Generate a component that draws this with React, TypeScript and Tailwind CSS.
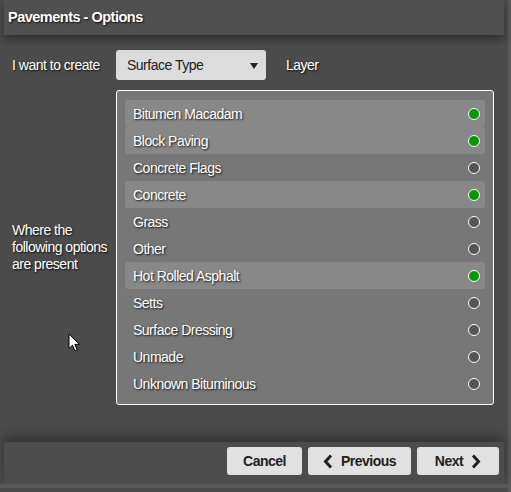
import React from "react";

const items: { name: string; on: boolean }[] = [
  { name: "Bitumen Macadam", on: true },
  { name: "Block Paving", on: true },
  { name: "Concrete Flags", on: false },
  { name: "Concrete", on: true },
  { name: "Grass", on: false },
  { name: "Other", on: false },
  { name: "Hot Rolled Asphalt", on: true },
  { name: "Setts", on: false },
  { name: "Surface Dressing", on: false },
  { name: "Unmade", on: false },
  { name: "Unknown Bituminous", on: false },
];

const shadowText = "[text-shadow:1px_1px_2px_rgba(0,0,0,0.85)]";

function Chevron({ dir }: { dir: "left" | "right" }) {
  return (
    <svg width="10" height="15" viewBox="0 0 10 15" className="shrink-0">
      <path
        d={dir === "left" ? "M8 1.5 L2.5 7.5 L8 13.5" : "M2 1.5 L7.5 7.5 L2 13.5"}
        fill="none"
        stroke="#222"
        strokeWidth="3"
        strokeLinecap="butt"
        strokeLinejoin="miter"
      />
    </svg>
  );
}

export default function App() {
  return (
    <div
      className="relative flex w-[511px] h-[492px] overflow-hidden bg-[#4b4b4b] text-[14px] tracking-[-0.5px]"
      style={{ fontFamily: '"Liberation Sans", Arial, sans-serif' }}
    >
      <div className="flex flex-col w-[508px] h-[488px]">
        {/* header */}
        <div className="relative z-10 ml-[4px] w-[500px] h-[35px] shrink-0 bg-[#505050] shadow-[0_5px_8px_rgba(0,0,0,0.35)] flex items-center pl-[4px] pt-[1px]">
          <span className={`font-bold text-white text-[14.5px] ${shadowText}`}>Pavements - Options</span>
        </div>

        {/* body */}
        <div className="flex-1 flex flex-col pt-[15px] pl-[12px]">
          <div className="flex items-center h-[30px]">
            <div className={`w-[104px] text-white pt-[1px] ${shadowText}`}>I want to create</div>
            <div className="w-[150px] h-[30px] rounded-[3px] bg-[#dcdcdc] flex items-center justify-between pl-[11px] pr-[8px] pt-[1px] text-[#222]">
              <span>Surface Type</span>
              <svg width="8" height="6" viewBox="0 0 8 6">
                <path d="M0 0 H8 L4 6 Z" fill="#222" />
              </svg>
            </div>
            <div className={`ml-[20px] pt-[1px] text-white ${shadowText}`}>Layer</div>
          </div>

          <div className="flex items-center mt-[10px]">
            <div className={`w-[104px] pr-[4px] text-white leading-[17px] ${shadowText}`}>
              Where the following options are present
            </div>
            <div className="w-[378px] h-[315px] border border-white rounded-[3px] bg-[#777777] pt-[9px] pb-[7px] px-[8px] flex flex-col">
              {items.map((it) => (
                <div
                  key={it.name}
                  className={`h-[27px] shrink-0 flex items-center justify-between pl-[8px] pr-[5px] rounded-[3px] ${
                    it.on ? "bg-[#888888]" : ""
                  }`}
                >
                  <span className={`text-white pt-[1px] ${shadowText}`}>{it.name}</span>
                  <span
                    className={`w-[12px] h-[12px] rounded-full border-[1.5px] border-white ${
                      it.on ? "bg-[#009900]" : "bg-[#555555]"
                    }`}
                  />
                </div>
              ))}
            </div>
          </div>
        </div>

        {/* footer */}
        <div className="relative z-10 ml-[4px] w-[500px] h-[42px] shrink-0 bg-[#4c4c4c] shadow-[0_-6px_10px_rgba(0,0,0,0.3)] flex items-start justify-end gap-[6px] pt-[5px] pr-[5px]">
          <button className="h-[28px] w-[75px] rounded-[3px] bg-[#e1e1e1] font-bold text-[#222] flex items-center justify-center">
            Cancel
          </button>
          <button className="h-[28px] w-[103px] rounded-[3px] bg-[#e1e1e1] font-bold text-[#222] flex items-center justify-center gap-[8px]">
            <Chevron dir="left" />
            <span>Previous</span>
          </button>
          <button className="h-[28px] w-[82px] rounded-[3px] bg-[#e1e1e1] font-bold text-[#222] flex items-center justify-center gap-[8px]">
            <span>Next</span>
            <Chevron dir="right" />
          </button>
        </div>
        <div className="h-[4px] bg-[#595959] w-[511px]" />
      </div>
      <div className="w-[3px] h-full bg-[#595959]" />

      {/* mouse cursor */}
      <svg className="absolute left-[68px] top-[333px]" width="14" height="20" viewBox="0 0 14 20">
        <path
          d="M1 1 L1 15.5 L4.5 12.2 L7 18 L9.2 17 L6.8 11.4 L11.5 11.4 Z"
          fill="white"
          stroke="black"
          strokeWidth="1"
          strokeLinejoin="miter"
        />
      </svg>
    </div>
  );
}
